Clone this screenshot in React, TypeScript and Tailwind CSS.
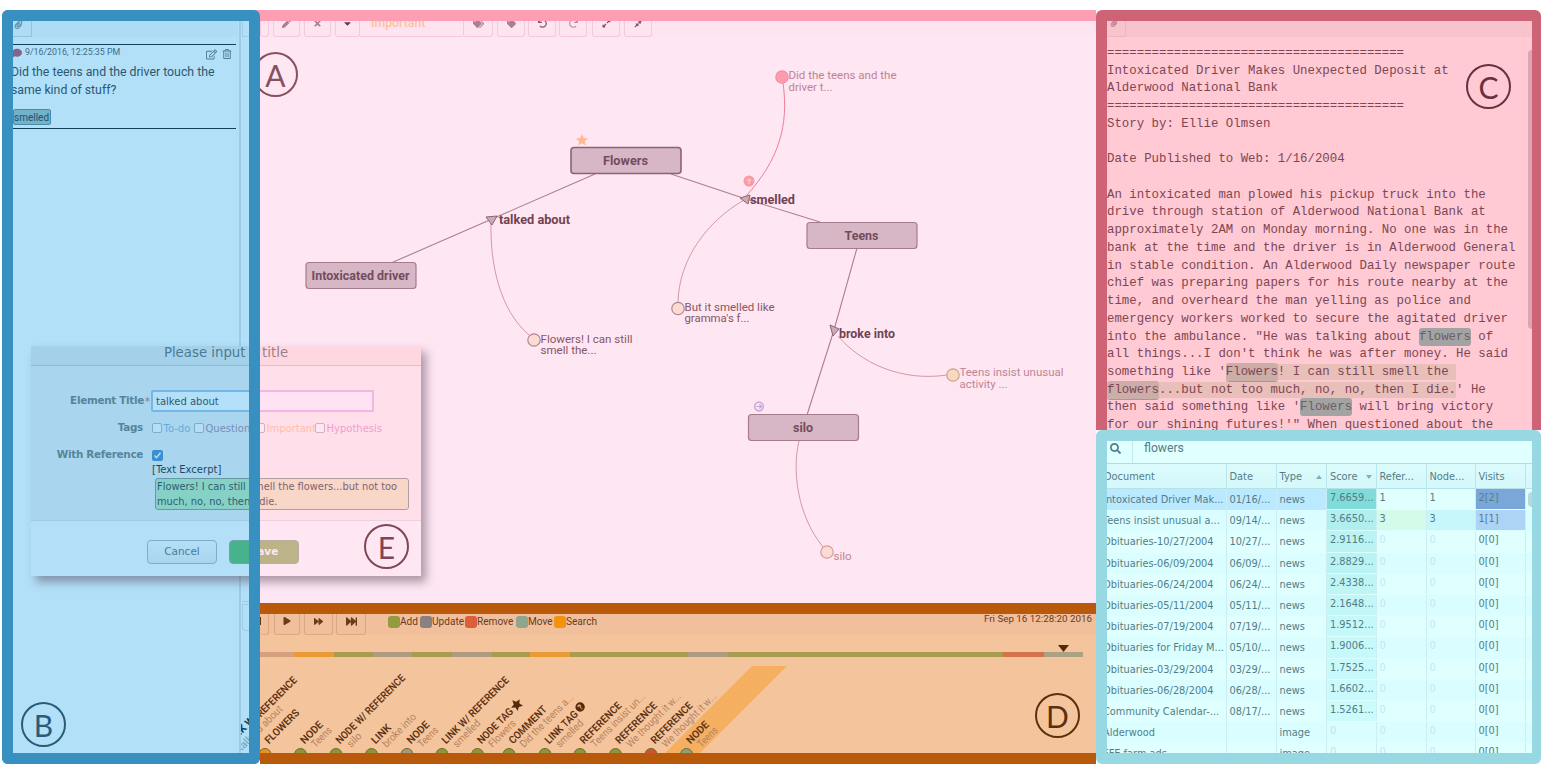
import React from "react";
import {
  FaPen,
  FaTimes,
  FaCaretDown,
  FaTags,
  FaTag,
  FaUndo,
  FaRedo,
  FaExpandAlt,
  FaCompressAlt,
  FaPlay,
  FaForward,
  FaFastForward,
  FaSearch,
  FaRegEdit,
  FaRegTrashAlt,
  FaComment,
  FaPaperclip,
} from "react-icons/fa";

function Marker({ letter, className }: { letter: string; className: string }) {
  return (
    <div
      className={`absolute flex h-[45px] w-[45px] items-center justify-center rounded-full border-2 font-['Lato',sans-serif] text-[30px] leading-none ${className}`}
    >
      {letter}
    </div>
  );
}

/* ---------- Notes panel ---------- */

function NotesPanel() {
  return (
    <section className="relative flex h-full w-[258px] shrink-0 rounded-md bg-[#3790c0] p-[11px]">
      <div className="flex h-full w-[225px] flex-col overflow-hidden bg-[#b3e0f9] text-[#2a5873]">
        <div className="flex h-4 shrink-0 items-end bg-[#aedcf5]">
          <div className="flex h-7 w-[19px] items-center border-b border-r border-[#93c3de] pl-px pt-1 text-[#5f91ad]">
            <FaPaperclip size={9} />
          </div>
        </div>
        <div className="mt-[7px] flex h-[85px] w-[223px] shrink-0 flex-col border-y border-[#173f58]">
          <div className="flex h-4 items-center">
            <FaComment size={10} className="-ml-px text-[#85648c]" />
            <span className="ml-[3px] font-['Roboto',sans-serif] text-[8.8px] text-[#3d6c87]">9/16/2016, 12:25:35 PM</span>
            <span className="ml-auto flex gap-[5px] pr-[4px] pt-[3px] text-[#4c7c97]">
              <FaRegEdit size={11} />
              <FaRegTrashAlt size={10} />
            </span>
          </div>
          <p className="-ml-[2px] mt-[2px] whitespace-nowrap font-['Roboto',sans-serif] text-[12.3px] leading-[18px]">
            Did the teens and the driver touch the
            <br />
            same kind of stuff?
          </p>
          <div className="mt-[10px] flex h-4 w-[38px] items-center rounded-[2px] border border-[#4a8ba6] bg-[#72b2ca] font-['Roboto',sans-serif] text-[10px] text-[#245068]">
            smelled
          </div>
        </div>
      </div>
      <div className="flex w-[11px] flex-col bg-[#b3e0f9]">
        <div className="ml-[1px] flex h-full w-[10px] flex-col border-l-2 border-[#9dcce5]">
          <div className="ml-px h-4 border-b border-l border-[#9dcce5]" />
          <div className="ml-px h-[565px] border-b border-[#9dcce5]" />
          <div className="ml-px mt-[2px] h-[27px] rounded-bl border-b border-l border-t border-[#9dcce5]" />
          <svg className="mt-auto h-[110px] w-full" viewBox="241 643 8 110">
            <g transform="translate(231 745) rotate(-45)" fontFamily="Roboto, sans-serif" fontSize="10.5">
              <text fontWeight="700" fill="#16394f">LINK W/</text>
              <text x="3" y="12" fill="#6a9db9">talk</text>
            </g>
          </svg>
        </div>
      </div>
      <div className="pointer-events-none absolute inset-0 z-20 rounded-md border-[11px] border-[#3790c0]" />
      <Marker letter="B" className="left-[19px] top-[692px] border-[#2a5b78] text-[#2a5b78]" />
    </section>
  );
}

/* ---------- Concept map ---------- */

function Tool({ children, className }: { children?: React.ReactNode; className: string }) {
  return (
    <div className={`flex h-7 shrink-0 items-center justify-center rounded-b-[3px] border-x border-b border-[#f6cadb] pt-[1px] ${className}`}>
      {children}
    </div>
  );
}

function MapToolbar() {
  return (
    <div className="flex h-4 shrink-0 items-end overflow-hidden bg-[#fee3f0] text-[#ad7e8f]">
      <Tool className="w-[9px]" />
      <Tool className="ml-[4px] w-[27px]"><FaPen size={9} /></Tool>
      <Tool className="ml-[4px] w-[27px]"><FaTimes size={9} /></Tool>
      <Tool className="ml-[4px] w-[25px] text-[#6b3a4c]"><FaCaretDown size={11} /></Tool>
      <div className="flex h-7 w-[103px] items-center border-b border-[#f6cadb] pl-[11px] pt-[2px] font-['Roboto',sans-serif] text-[12.3px] font-medium text-[#ffc09c]">
        Important
      </div>
      <Tool className="w-[30px]"><FaTags size={11} /></Tool>
      <Tool className="ml-[4px] w-[28px]"><FaTag size={9} /></Tool>
      <Tool className="ml-[3px] w-[28px] text-[#8a5868]"><FaUndo size={9} /></Tool>
      <Tool className="ml-[3px] w-[28px] text-[#c08d9f]"><FaRedo size={9} /></Tool>
      <Tool className="ml-[5px] w-[28px] text-[#7c4a5b]"><FaExpandAlt size={9} /></Tool>
      <Tool className="ml-[4px] w-[28px] text-[#7c4a5b]"><FaCompressAlt size={9} /></Tool>
    </div>
  );
}

const nodes = [
  { x: 571, y: 147.5, label: "Flowers", w: 45, strong: true },
  { x: 306, y: 262.5, label: "Intoxicated driver", w: 98 },
  { x: 807, y: 222.5, label: "Teens", w: 34 },
  { x: 748.5, y: 414.5, label: "silo", w: 20 },
];

const relations = [
  { x: 499, y: 224, label: "talked about", w: 71 },
  { x: 750, y: 204, label: "smelled", w: 45 },
  { x: 839, y: 337.5, label: "broke into", w: 56 },
];

const excerpts = [
  { cx: 782, cy: 77, lines: ["Did the teens and the", "driver t..."], w: [108, 44], fill: "#fd9cae", stroke: "#fa8da3", text: "#bf8291", dy: 2 },
  { cx: 678, cy: 308.5, lines: ["But it smelled like", "gramma's f..."], w: [90, 65], fill: "#fbdcd5", stroke: "#b28790", text: "#875663", dy: 2 },
  { cx: 534, cy: 340, lines: ["Flowers! I can still", "smell the..."], w: [92, 56], fill: "#fbdcd5", stroke: "#b28790", text: "#875663", dy: 2.5 },
  { cx: 953, cy: 375, lines: ["Teens insist unusual", "activity ..."], w: [104, 48], fill: "#f7dabd", stroke: "#cfa092", text: "#c08593", dy: 1 },
  { cx: 827, cy: 552, lines: ["silo"], w: [18], fill: "#fbdcd5", stroke: "#d59ba2", text: "#c08593", dy: 8 },
];

function ConceptMap() {
  return (
    <svg className="block h-[566px] w-[836px] shrink-0" viewBox="260 37 836 566" fontFamily="Roboto, sans-serif">
      <g fill="none" stroke="#ad7e90" strokeWidth="1.1">
        <path d="M595 174L492 219L391 263" />
        <path d="M671 174L746 199L820 222" />
        <path d="M857 248L834 330L807 415" />
        <g stroke="#d498a6" strokeWidth="1">
          <path d="M491 222C490 265 500 310 529 335" />
          <path d="M744 200C706 222 679 260 678 302" />
          <path d="M838 336C860 362 900 382 947 375" />
          <path d="M799 441C792 470 797 515 823 547" />
          <path d="M783 83C789 125 779 160 746 196" stroke="#ed7f99" />
        </g>
      </g>
      {nodes.map((n) => (
        <g key={n.label}>
          <rect x={n.x} y={n.y} width="110" height="26" rx="3" fill="#d7b6c5" stroke={n.strong ? "#8d6373" : "#a87b8a"} strokeWidth={n.strong ? 1.6 : 1.2} />
          <text x={n.x + 54.5} y={n.y + 17.5} textAnchor="middle" fontSize="12" fontWeight="700" fill="#754c5d" textLength={n.w} lengthAdjust="spacingAndGlyphs">
            {n.label}
          </text>
        </g>
      ))}
      <g fill="#cbaab7" stroke="#8c6574" strokeWidth="1">
        <path d="M486 217L497 216L492 225Z" />
        <path d="M740 198L750 195L748 204Z" />
        <path d="M830 325L839 329L833 336Z" />
      </g>
      {relations.map((r) => (
        <text key={r.label} x={r.x} y={r.y} fontSize="12" fontWeight="700" fill="#704354" textLength={r.w} lengthAdjust="spacingAndGlyphs">
          {r.label}
        </text>
      ))}
      {excerpts.map((e) => (
        <g key={e.lines[0]}>
          <circle cx={e.cx} cy={e.cy} r="6.2" fill={e.fill} stroke={e.stroke} strokeWidth="1.2" />
          {e.lines.map((line, i) => (
            <text key={line} x={e.cx + 6.5} y={e.cy + e.dy + i * 11.5} fontSize="10.8" fill={e.text} textLength={e.w[i]} lengthAdjust="spacingAndGlyphs">
              {line}
            </text>
          ))}
        </g>
      ))}
      <path d="M582 134l1.8 4 4.2.4-3.2 2.9 1 4.2-3.8-2.2-3.8 2.2 1-4.2-3.2-2.9 4.2-.4z" fill="#ffba93" />
      <circle cx="749" cy="181" r="5.5" fill="#fc9aa6" />
      <text x="749" y="184" fontSize="8" fontWeight="700" textAnchor="middle" fill="#fee0e8">?</text>
      <circle cx="759" cy="406.5" r="4.3" fill="#f8e4f6" stroke="#cbaed7" strokeWidth="1.7" />
      <path d="M756.5 406.5h5M759.5 404.5l2 2-2 2" fill="none" stroke="#c3a3d3" strokeWidth="1.1" />
    </svg>
  );
}

/* ---------- Timeline ---------- */

const legend = [
  { label: "Add", box: "bg-[#949a3d]", w: "w-[32px]" },
  { label: "Update", box: "bg-[#898080]", w: "w-[45px]" },
  { label: "Remove", box: "bg-[#dc5f3a]", w: "w-[51px]" },
  { label: "Move", box: "bg-[#8fa58c]", w: "w-[38px]" },
  { label: "Search", box: "bg-[#f4920f]", w: "w-[45px]" },
];

const segments = [
  "w-[34px] bg-[#d6a080]",
  "w-[40px] bg-[#e99a35]",
  "w-[39px] bg-[#a99b4f]",
  "w-[39px] bg-[#af9b7f]",
  "w-[40px] bg-[#a99b4f]",
  "w-[40px] bg-[#af9b7f]",
  "w-[38px] bg-[#a99b4f]",
  "w-[40px] bg-[#e99a35]",
  "w-[118px] bg-[#a99b4f]",
  "w-[40px] bg-[#af9b7f]",
  "w-[275px] bg-[#a99b4f]",
  "w-[41px] bg-[#d4734a]",
  "w-[39px] bg-[#a9a283]",
];

const G = "#8e963b";
const events = [
  { x: 230, title: "LINK W/ REFERENCE", tw: 90, sub: "talked about", sw: 54, c: G },
  { x: 265, title: "FLOWERS", tw: 44, sub: "", sw: 0, c: "#ee8f20" },
  { x: 300.5, title: "NODE", tw: 27, sub: "Teens", sw: 24, c: G },
  { x: 336, title: "NODE W/ REFERENCE", tw: 93, sub: "silo", sw: 16, c: G },
  { x: 371.5, title: "LINK", tw: 23, sub: "broke into", sw: 43, c: G },
  { x: 407, title: "NODE", tw: 27, sub: "Teens", sw: 24, c: "#a39a80" },
  { x: 442, title: "LINK W/ REFERENCE", tw: 90, sub: "smelled", sw: 34, c: G },
  { x: 477.5, title: "NODE TAG", tw: 46, sub: "Flowers", sw: 34, c: G, star: true },
  { x: 509, title: "COMMENT", tw: 49, sub: "Did the teens a...", sw: 71, c: G },
  { x: 545, title: "LINK TAG", tw: 42, sub: "smelled", sw: 34, c: G, question: true },
  { x: 580, title: "REFERENCE", tw: 54, sub: "Teens insist un...", sw: 72, c: G },
  { x: 615.5, title: "REFERENCE", tw: 54, sub: "We thought it w...", sw: 72, c: G },
  { x: 651, title: "REFERENCE", tw: 54, sub: "We thought it w...", sw: 72, c: "#cf5430" },
  { x: 686.5, title: "NODE", tw: 27, sub: "Teens", sw: 24, c: "#8fa07a" },
];

function Timeline() {
  return (
    <section className="relative flex h-[161px] shrink-0 flex-col overflow-hidden border-y-[11px] border-[#b8590b] bg-[#f4c59d] text-[#693c1c]">
      <div className="flex h-5 shrink-0 items-start bg-[#f1bf9b]">
        <div className="flex h-[21px] w-[9px] items-center rounded-b-[3px] border-b border-r border-[#dea87f] pb-[7px]">
          <div className="h-[8px] w-px bg-[#5e3213]" />
        </div>
        <div className="ml-[5px] flex h-[21px] w-[26px] items-center justify-center rounded-b-[3px] border-x border-b border-[#dea87f] pb-[6px]"><FaPlay size={8} /></div>
        <div className="ml-[4px] flex h-[21px] w-[29px] items-center justify-center rounded-b-[3px] border-x border-b border-[#dea87f] pb-[6px]"><FaForward size={9} /></div>
        <div className="ml-[3px] flex h-[21px] w-[30px] items-center justify-center rounded-b-[3px] border-x border-b border-[#dea87f] pb-[6px]"><FaFastForward size={11} /></div>
        <div className="ml-[22px] flex h-4 items-center font-['Roboto',sans-serif] text-[10.1px]">
          {legend.map((l) => (
            <div key={l.label} className={`flex shrink-0 items-center whitespace-nowrap ${l.w}`}>
              <span className={`h-3 w-3 shrink-0 rounded-[3px] ${l.box}`} />
              {l.label}
            </div>
          ))}
        </div>
        <div className="ml-auto whitespace-nowrap pr-[4px] font-['Roboto',sans-serif] text-[9.8px] leading-[10px]">Fri Sep 16 12:28:20 2016</div>
      </div>
      <div className="mt-[11px] flex h-[3px] justify-end pr-[26px]">
        <svg className="h-2 w-3 shrink-0" viewBox="0 0 12 8"><path d="M0 0h11L5.500 7z" fill="#552a0b" /></svg>
      </div>
      <div className="mt-[4px] flex h-[5px] shrink-0">
        {segments.map((s, i) => (
          <div key={i} className={`h-full ${s}`} />
        ))}
      </div>
      <svg className="block h-[96px] w-[836px] shrink-0" viewBox="260 657 836 96" fontFamily="Roboto, sans-serif">
        <path d="M752 666H787L700 753H665Z" fill="#f4af61" />
        {events.map((e) => (
          <g key={e.x}>
            <circle cx={e.x} cy="754.5" r="6" fill={e.c} stroke="#6d6b2c" strokeWidth="1" />
            <g transform={`translate(${e.x + 4} 744.5) rotate(-45)`}>
              <text fontSize="10.5" fontWeight="600" fill="#5e3213" textLength={e.tw} lengthAdjust="spacingAndGlyphs">
                {e.title}
              </text>
              {e.star && <path d="M53 -9.5l1.8 4 4.2.4-3.2 2.9 1 4.2-3.8-2.2-3.8 2.2 1-4.2-3.2-2.9 4.2-.4z" fill="#54290c" />}
              {e.question && (
                <>
                  <circle cx="48.5" cy="-4.5" r="4.7" fill="#54290c" />
                  <text x="48.5" y="-1.5" textAnchor="middle" fontSize="8" fontWeight="700" fill="#f4c59d">?</text>
                </>
              )}
            </g>
            {e.sub && (
              <text transform={`translate(${e.x + 15} 748) rotate(-45)`} fontSize="10.5" fill="#b58260" textLength={e.sw} lengthAdjust="spacingAndGlyphs">
                {e.sub}
              </text>
            )}
          </g>
        ))}
      </svg>
      <Marker letter="D" className="left-[775px] top-[79px] border-[#5c2f0e] text-[#5c2f0e]" />
    </section>
  );
}

/* ---------- Document viewer ---------- */

const hit = "rounded-[3px] bg-[#a3a3a3] py-[2px] text-[#6a5f63]";
const softHit = "rounded-[3px] bg-[#cbaea8] py-[2px] shadow-[0_1px_0_#a99793]";
const quote = "bg-[#e8bfb9] py-px";

function DocumentViewer() {
  return (
    <section className="relative flex h-[420px] shrink-0 rounded-t-md bg-[#cd6374] pl-[11px] pr-[9px] pt-[11px]">
      <div className="flex w-full flex-col overflow-hidden bg-[#ffcad3]">
        <div className="flex h-4 shrink-0 items-end bg-[#f9c3cd]">
          <div className="flex h-7 w-[19px] items-center border-b border-r border-[#f0b5c0] pl-[3px] text-[#b98492]">
            <FaPaperclip size={8} />
          </div>
        </div>
        <div className="flex min-h-0 flex-1">
          <pre className="w-[418px] shrink-0 overflow-hidden border-r border-[#fbc4ce] pt-2 font-['Liberation_Mono',monospace] text-[12.38px] leading-[17.72px] text-[#7e4655]">
            {"========================================\n"}
            {"Intoxicated Driver Makes Unexpected Deposit at\n"}
            {"Alderwood National Bank\n"}
            {"========================================\n"}
            {"Story by: Ellie Olmsen\n\n"}
            {"Date Published to Web: 1/16/2004\n\n"}
            {"An intoxicated man plowed his pickup truck into the\n"}
            {"drive through station of Alderwood National Bank at\n"}
            {"approximately 2AM on Monday morning. No one was in the\n"}
            {"bank at the time and the driver is in Alderwood General\n"}
            {"in stable condition. An Alderwood Daily newspaper route\n"}
            {"chief was preparing papers for his route nearby at the\n"}
            {"time, and overheard the man yelling as police and\n"}
            {"emergency workers worked to secure the agitated driver\n"}
            {"into the ambulance. \"He was talking about "}
            <span className={hit}>flowers</span>
            {" of\nall things...I don't think he was after money. He said\nsomething like '"}
            <span className={softHit}>Flowers</span>
            <span className={quote}>{"! I can still smell the "}</span>
            {"\n"}
            <span className={softHit}>flowers</span>
            <span className={quote}>...but not too much, no, no, then I die.</span>
            {"' He\nthen said something like '"}
            <span className={hit}>Flowers</span>
            {" will bring victory\nfor our shining futures!'\" When questioned about the"}
          </pre>
          <div className="ml-[3px] mt-[13px] h-[279px] w-[5px] rounded-l bg-[#dda5b1]" />
        </div>
      </div>
      <Marker letter="C" className="left-[370px] top-[54px] border-[#6a303f] text-[#6a303f]" />
    </section>
  );
}

/* ---------- Search results ---------- */

type Row = { doc: string; date: string; type: string; score: string; refs: string; nodes: string; visits: string; tone: string; refTone?: string; nodeTone?: string; visitTone?: string };

const rows: Row[] = [
  { doc: "Intoxicated Driver Mak...", date: "01/16/...", type: "news", score: "7.6659...", refs: "1", nodes: "1", visits: "2[2]", tone: "bg-[#80dbd9]", visitTone: "bg-[#7aa7da]" },
  { doc: "Teens insist unusual a...", date: "09/14/...", type: "news", score: "3.6650...", refs: "3", nodes: "3", visits: "1[1]", tone: "bg-[#b0efee]", refTone: "bg-[#d4fbe9]", nodeTone: "bg-[#c7f7fa]", visitTone: "bg-[#add3f5]" },
  { doc: "Obituaries-10/27/2004", date: "10/27/...", type: "news", score: "2.9116...", refs: "0", nodes: "0", visits: "0[0]", tone: "bg-[#b9f3f3]" },
  { doc: "Obituaries-06/09/2004", date: "06/09/...", type: "news", score: "2.8829...", refs: "0", nodes: "0", visits: "0[0]", tone: "bg-[#b9f3f3]" },
  { doc: "Obituaries-06/24/2004", date: "06/24/...", type: "news", score: "2.4338...", refs: "0", nodes: "0", visits: "0[0]", tone: "bg-[#bff5f5]" },
  { doc: "Obituaries-05/11/2004", date: "05/11/...", type: "news", score: "2.1648...", refs: "0", nodes: "0", visits: "0[0]", tone: "bg-[#c2f6f7]" },
  { doc: "Obituaries-07/19/2004", date: "07/19/...", type: "news", score: "1.9512...", refs: "0", nodes: "0", visits: "0[0]", tone: "bg-[#c5f8f9]" },
  { doc: "Obituaries for Friday M...", date: "05/10/...", type: "news", score: "1.9006...", refs: "0", nodes: "0", visits: "0[0]", tone: "bg-[#c6f9fa]" },
  { doc: "Obituaries-03/29/2004", date: "03/29/...", type: "news", score: "1.7525...", refs: "0", nodes: "0", visits: "0[0]", tone: "bg-[#c8f9fb]" },
  { doc: "Obituaries-06/28/2004", date: "06/28/...", type: "news", score: "1.6602...", refs: "0", nodes: "0", visits: "0[0]", tone: "bg-[#cafafb]" },
  { doc: "Community Calendar-...", date: "08/17/...", type: "news", score: "1.5261...", refs: "0", nodes: "0", visits: "0[0]", tone: "bg-[#ccfbfc]" },
  { doc: "Alderwood", date: "", type: "image", score: "0", refs: "0", nodes: "0", visits: "0[0]", tone: "text-[#bfe6ea]" },
  { doc: "FFE farm ads", date: "", type: "image", score: "0", refs: "0", nodes: "0", visits: "0[0]", tone: "text-[#bfe6ea]" },
];

const grid = "grid grid-cols-[119.5px_50px_50.5px_49.5px_50px_49px_50px_6.5px]";

function SearchResults() {
  return (
    <section className="relative flex h-[334px] shrink-0 rounded-md bg-[#97d8e2] py-[11px] pl-[11px] pr-[9px]">
      <div className="flex w-full flex-col overflow-hidden bg-[#e0ffff] font-['DejaVu_Sans',sans-serif] text-[9.8px] text-[#527d87]">
        <div className="flex h-[23px] shrink-0 border-b border-[#aedde4]">
          <div className="flex w-[26px] items-center border-r border-[#c3ebef] pb-[7px] pl-[3px]"><FaSearch size={11} /></div>
          <div className="pl-[11px] pt-px font-['Roboto',sans-serif] text-[12.2px] leading-[13px]">flowers</div>
        </div>
        <div className={`${grid} h-[25px] shrink-0 border-b border-[#b4e2e8] bg-gradient-to-b from-[#dcfbfc] to-[#d5f8fb] leading-[25px]`}>
          <div className="overflow-hidden whitespace-nowrap border-r border-[#b9e6ec]"><span className="-ml-[3px]">Document</span></div>
          <div className="border-r border-[#b9e6ec] pl-[3px]">Date</div>
          <div className="flex items-center justify-between border-r border-[#b9e6ec] pl-[3px] pr-[4px]">Type<svg width="6" height="4" viewBox="0 0 6 4"><path d="M3 0L6 4H0z" fill="#82afb8" /></svg></div>
          <div className="flex items-center justify-between border-r border-[#b9e6ec] pl-[3px] pr-[4px]">Score<svg width="6" height="4" viewBox="0 0 6 4"><path d="M0 0H6L3 4z" fill="#82afb8" /></svg></div>
          <div className="border-r border-[#b9e6ec] pl-[3px]">Refer...</div>
          <div className="border-r border-[#b9e6ec] pl-[3px]">Node...</div>
          <div className="border-r border-[#b9e6ec] pl-[3px]">Visits</div>
          <div />
        </div>
        {rows.map((r, i) => {
          const base = i === 0 ? "bg-[#bbe9ff]" : i % 2 ? "bg-[#dafdff]" : "bg-[#e0ffff]";
          const faint = r.refs === "0" ? "text-[#c3e9ed]" : "";
          return (
            <div key={r.doc} className={`${grid} h-[21.2px] shrink-0 whitespace-nowrap leading-[21px] ${i % 2 ? "bg-[#dafdff]" : "bg-[#e0ffff]"}`}>
              <div className={`overflow-hidden border-r border-[#c8eff3] ${base}`}><span className="-ml-[4px]">{r.doc}</span></div>
              <div className={`border-r border-[#c8eff3] pl-[3px] ${base}`}>{r.date}</div>
              <div className={`border-r border-[#c8eff3] pl-[3px] ${base}`}>{r.type}</div>
              <div className={`mb-px border-r border-[#c8eff3] pl-[3px] leading-[18.5px] ${r.tone}`}>{r.score}</div>
              <div className={`mb-px border-r border-[#c8eff3] pl-[3px] leading-[18.5px] ${faint} ${r.refTone ?? ""}`}>{r.refs}</div>
              <div className={`mb-px border-r border-[#c8eff3] pl-[3px] leading-[18.5px] ${faint} ${r.nodeTone ?? ""}`}>{r.nodes}</div>
              <div className={`mb-px border-r border-[#c8eff3] pl-[3px] leading-[18.5px] ${r.visitTone ?? ""}`}>{r.visits}</div>
              <div className="flex items-center justify-end">{i === 0 && <div className="h-[15px] w-1 rounded-l bg-[#b6d9dd]" />}</div>
            </div>
          );
        })}
      </div>
    </section>
  );
}

/* ---------- Dialog ---------- */

function TitleDialog() {
  const tags = [
    { label: "To-do", cls: "w-[42px] text-[#73acd0]" },
    { label: "Question", cls: "w-[61px] text-[#a07890]" },
    { label: "Important", cls: "w-[60px] text-[#ffbe84]" },
    { label: "Hypothesis", cls: "text-[#e884cc]" },
  ];
  return (
    <div className="absolute left-[31px] top-[346px] z-10 flex h-[230px] w-[390px] flex-col bg-white font-['DejaVu_Sans',sans-serif] text-[10px] text-[#222] shadow-[5px_6px_9px_rgba(60,40,60,0.42)]">
      <div className="h-5 shrink-0 border-b border-[#c4c4c4] bg-[linear-gradient(90deg,#e6e6e6_223px,#ffe6e0_223px)] text-center text-[13.3px] leading-[14px] text-[#555]">Please input a title</div>
      <div className="flex h-[155px] shrink-0 flex-col border-b border-[#ddd] bg-[linear-gradient(90deg,#eeeeee_223px,#fff3ee_223px)]">
        <div className="mt-[24px] flex h-[22px] items-center">
          <div className="w-[113px] pb-px text-right text-[10.4px] font-bold tracking-[-0.3px] text-[#666]">Element Title</div>
          <div className="w-[7px] text-center text-[#d33]">*</div>
          <div className="flex h-[22px] w-[223px] items-center rounded-[2px] border-2 border-[#91bce4] bg-[linear-gradient(90deg,#fff_101px,#fff8ff_101px)]">
            <div className="-my-[2px] -mr-[2px] ml-auto order-2 h-[22px] w-[122px] rounded-r-[2px] border-y-2 border-r-2 border-[#ecb0e2]" />
            <span className="w-[99px] pl-[3px] pt-px">talked about</span>
          </div>
        </div>
        <div className="mt-[5px] flex h-[22px] items-center">
          <div className="w-[112px] text-right text-[10.4px] font-bold tracking-[-0.3px] text-[#666]">Tags</div>
          <div className="ml-[9px] flex">
            {tags.map((t) => (
              <div key={t.label} className={`flex shrink-0 items-center gap-[1.5px] ${t.cls}`}>
                <span className="h-[10px] w-[10px] shrink-0 rounded-[2px] border border-[#aaa] bg-white" />
                {t.label}
              </div>
            ))}
          </div>
        </div>
        <div className="mt-[6px] flex h-[20px] items-center">
          <div className="w-[112px] text-right text-[10.4px] font-bold tracking-[-0.3px] text-[#666]">With Reference</div>
          <div className="ml-[9px] flex h-[11px] w-[11px] items-center justify-center rounded-[2px] bg-[#3478bd]">
            <svg width="9" height="9" viewBox="0 0 9 9"><path d="M1.5 4.5l2 2.2 4-5" fill="none" stroke="#fff" strokeWidth="1.5" /></svg>
          </div>
        </div>
        <div className="ml-[121px] h-[13px] leading-[10px] text-black">[Text Excerpt]</div>
        <div className="ml-[124px] h-[32px] w-[254px] shrink-0 whitespace-nowrap rounded-[3px] border border-[#7c8a70] bg-[linear-gradient(90deg,#b4e6ab_98px,#f4e4b8_98px)] pl-[1px] pt-px text-[9.85px] leading-[14.5px]">
          Flowers! I can still smell the flowers...but not too
          <br />
          much, no, no, then I die.
        </div>
      </div>
      <div className="flex flex-1 items-center pl-[116px] pt-[6px]">
        <div className="flex h-[24px] w-[70px] items-center justify-center rounded-[4px] border border-[#aaa] bg-gradient-to-b from-white to-[#eee] text-[10.5px] text-[#555]">Cancel</div>
        <div className="ml-[12px] flex h-[24px] w-[70px] items-center justify-center rounded-[4px] border border-[#88a17a] bg-[linear-gradient(90deg,#4eb24e_25px,#8fac4e_25px)] text-[10.5px] font-bold text-white">Save</div>
      </div>
      <div className="absolute inset-y-0 left-0 w-[223px] bg-[rgba(65,177,238,0.4)]" />
      <div className="absolute inset-y-0 left-[223px] right-0 bg-[rgba(255,192,225,0.4)]" />
      <Marker letter="E" className="right-[12px] top-[178px] border-[#7d4757] text-[#7d4757]" />
    </div>
  );
}

export default function App() {
  return (
    <main className="relative flex h-[767px] w-[1541px] overflow-hidden bg-white pb-[3px] pl-[2px] pt-[10px]">
      <NotesPanel />
      <div className="flex h-full w-[836px] shrink-0 flex-col">
        <section className="relative -ml-[6px] flex h-[593px] shrink-0 flex-col overflow-hidden border-t-[11px] border-[#fc9fb5] bg-[#fee6f3] pl-[6px]">
          <MapToolbar />
          <ConceptMap />
          <Marker letter="A" className="-left-[1px] top-[31px] border-[#86505f] text-[#86505f]" />
        </section>
        <Timeline />
      </div>
      <div className="flex h-full w-[445px] shrink-0 flex-col">
        <DocumentViewer />
        <SearchResults />
      </div>
      <TitleDialog />
    </main>
  );
}
